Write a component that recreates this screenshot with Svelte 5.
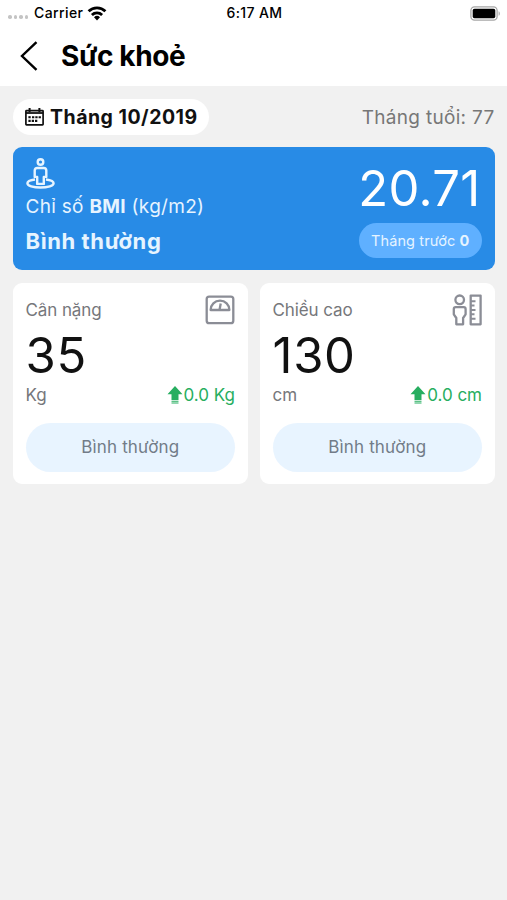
<!-- Health overview: BMI summary plus weight and height cards for a month. -->
<script lang="ts">
	interface Metric {
		id: 'weight' | 'height';
		label: string;
		value: number;
		unit: string;
		change: string;
		status: string;
	}

	const month = '10/2019';
	const ageInMonths = 77;

	const bmi = { value: '20.71', status: 'Bình thường', previous: 0 };

	const metrics: Metric[] = [
		{ id: 'weight', label: 'Cân nặng', value: 35, unit: 'Kg', change: '0.0', status: 'Bình thường' },
		{ id: 'height', label: 'Chiều cao', value: 130, unit: 'cm', change: '0.0', status: 'Bình thường' }
	];
</script>

<div class="screen">
	<header>
		<div class="status-bar">
			<div class="carrier">
				<span class="dots"><i></i><i></i><i></i><i></i></span>
				<span class="carrier-name">Carrier</span>
				<svg width="20" height="15" viewBox="0 0 20 15" fill="none" stroke="#000" stroke-width="2.8">
					<path d="M1.6 5.3a12 12 0 0 1 16.8 0" />
					<path d="M4.9 8.9a7.3 7.3 0 0 1 10.2 0" />
					<path d="M10 14.4 7 11.3a4.3 4.3 0 0 1 6 0z" fill="#000" stroke="none" />
				</svg>
			</div>
			<time>6:17 AM</time>
			<svg class="battery" width="31" height="15" viewBox="0 0 31 15">
				<rect x="0.9" y="0.9" width="26.2" height="13.2" rx="3.6" fill="#fff" stroke="#a6a6a6" stroke-width="1.3" />
				<rect x="2.7" y="2.7" width="22.6" height="9.6" rx="1.8" />
				<path d="M28.6 5.2c1.6.6 1.6 4 0 4.6z" fill="#a6a6a6" />
			</svg>
		</div>
		<div class="nav">
			<button type="button" class="back" aria-label="Quay lại">
				<svg width="18" height="30" viewBox="0 0 18 30" fill="none" stroke="#000" stroke-width="2.4">
					<path d="M16.5 1.2 2 15l14.5 13.8" />
				</svg>
			</button>
			<h1>Sức khoẻ</h1>
		</div>
	</header>

	<main>
		<div class="period">
			<button type="button" class="month">
				<svg width="19" height="18" viewBox="0 0 19 18" fill="none" stroke="#111" stroke-width="1.7">
					<rect x="0.9" y="2.6" width="17.2" height="14.3" rx="0.6" />
					<path d="M1 5h17" stroke-width="1.8" />
					<path d="M4.6 0v4M14.4 0v4" stroke-width="2" />
					<path d="M7 9.2h9M3.4 12.9h9" stroke-width="2.1" stroke-dasharray="2.3 1" />
					<path d="M3.4 9.2h2.3" stroke-width="2.1" />
				</svg>
				<span>Tháng {month}</span>
			</button>
			<span class="age">Tháng tuổi: {ageInMonths}</span>
		</div>

		<section class="bmi">
			<div class="bmi-info">
				<svg width="29" height="31" viewBox="0 0 29 31" fill="none" stroke="#e6f4ff" stroke-width="2.4">
					<circle cx="14.5" cy="4" r="2.8" />
					<path
						d="M11.3 10h6.4q2.6 0 2.6 2.6v6.3h-2.5v7h-6.6v-7H8.7v-6.3q0-2.6 2.6-2.6z"
						stroke-linejoin="round"
					/>
					<path d="M9 21.5c-4.5.6-7.6 2-7.6 3.7 0 2.5 5.8 4.3 13.1 4.3s13.1-1.8 13.1-4.3c0-1.7-3.1-3.1-7.6-3.7" />
				</svg>
				<p class="bmi-label">Chỉ số <b>BMI</b> (kg/m2)</p>
				<p class="bmi-status">{bmi.status}</p>
			</div>
			<div class="bmi-result">
				<span class="bmi-value">{bmi.value}</span>
				<span class="previous">Tháng trước <b>{bmi.previous}</b></span>
			</div>
		</section>

		<div class="metrics">
			{#each metrics as metric (metric.id)}
				<section class="card">
					<div class="card-head">
						<span>{metric.label}</span>
						{#if metric.id === 'weight'}
							<svg width="30" height="30" viewBox="0 0 30 30" fill="none" stroke="#8b8d96" stroke-width="2.3">
								<rect x="1.7" y="1.6" width="26.6" height="26.6" rx="2.5" />
								<path d="M5.6 15a9.4 9.4 0 0 1 18.8 0z" stroke-linejoin="round" />
								<path d="m14.5 15 1.2-6.5" />
							</svg>
						{:else}
							<svg width="30" height="32" viewBox="0 0 30 32" fill="none" stroke="#8b8d96" stroke-width="2.3">
								<circle cx="7.7" cy="5.8" r="4.3" />
								<path
									d="M3.7 13.2h8q1.9 0 1.9 1.9v5.2l-2.5 3.7v6.3H4.3V24l-2.5-3.7v-5.2q0-1.900 1.900-1.900z"
									stroke-linejoin="round"
								/>
								<path d="M18.7 1.600h9.900v28.700h-9.900z" stroke-linejoin="round" />
								<path d="M19 7.200h4.500M19 11.500h3.500M19 16h4.500M19 20.300h3.500M19 24.700h4.500" stroke-width="1.900" />
							</svg>
						{/if}
					</div>
					<div class="value">{metric.value}</div>
					<div class="card-foot">
						<span>{metric.unit}</span>
						<span class="change">
							<svg width="16" height="18" viewBox="0 0 16 18" fill="#27ae60">
								<path d="M8 0 15.500 8.300H11.500v6h-7v-6H.5zM4.500 15h7v.8h-7zM4.500 16.600h7v1h-7z" />
							</svg>
							{metric.change} {metric.unit}
						</span>
					</div>
					<div class="badge">{metric.status}</div>
				</section>
			{/each}
		</div>
	</main>
</div>

<style>
	:global(body) {
		background: #f1f1f1;
	}
	.screen {
		min-height: 900px;
		font-family: Inter, 'Liberation Sans', sans-serif;
		color: #111;
		background: #f1f1f1;
	}
	header {
		height: 86px;
		background: #fff;
	}
	svg {
		display: block;
		flex: none;
	}
	button {
		appearance: none;
		border: 0;
		padding: 0;
		background: none;
		font: inherit;
		color: inherit;
	}
	h1,
	p {
		margin: 0;
	}
	.status-bar {
		display: grid;
		grid-template-columns: 1fr auto 1fr;
		align-items: center;
		height: 26px;
		padding: 0 6px 0 8px;
		font-size: 14px;
		line-height: 26px;
		font-weight: 500;
		letter-spacing: 0.4px;
		color: #000;
	}
	.carrier {
		display: flex;
		align-items: center;
		height: 26px;
	}
	.dots {
		display: flex;
		gap: 2px;
		margin: 8px 6px 0 0;
	}
	.dots i {
		width: 3.5px;
		height: 3.5px;
		border-radius: 50%;
		background: #c4c4c4;
	}
	.carrier-name {
		margin-right: 4px;
	}
	.battery {
		justify-self: end;
	}
	.nav {
		display: flex;
		align-items: center;
		height: 60px;
		padding-left: 20px;
	}
	.back {
		margin-right: 23px;
	}
	h1 {
		font-size: 28px;
		line-height: 60px;
		font-weight: 700;
		letter-spacing: -0.4px;
		color: #000;
	}
	main {
		padding: 13px 12.5px;
	}
	.period {
		display: flex;
		justify-content: space-between;
		align-items: center;
		height: 36px;
	}
	.month {
		display: flex;
		align-items: center;
		gap: 6px;
		height: 36px;
		padding: 0 11.5px 0 12.5px;
		border-radius: 18px;
		background: #fff;
		font-size: 19.5px;
		font-weight: 650;
		letter-spacing: 0.5px;
	}
	.age {
		font-size: 19px;
		letter-spacing: 0.3px;
		color: #777;
	}
	.bmi {
		display: flex;
		justify-content: space-between;
		height: 123px;
		margin-top: 12px;
		padding: 11px 12.5px 0 13px;
		box-sizing: border-box;
		border-radius: 9px;
		background: #288be6;
		color: #e6f4ff;
	}
	.bmi-label {
		margin-top: 6px;
		font-size: 19px;
		line-height: 24px;
		letter-spacing: 0.3px;
	}
	.bmi-status {
		margin-top: 8px;
		font-size: 22px;
		line-height: 28px;
		font-weight: 700;
		letter-spacing: 0.6px;
	}
	.bmi-result {
		display: flex;
		flex-direction: column;
		align-items: flex-end;
	}
	.bmi-value {
		padding: 1px 1.5px 0 0;
		font-size: 49px;
		line-height: 60px;
		letter-spacing: 0.3px;
		color: #fff;
	}
	.previous {
		height: 35px;
		margin-top: 4px;
		padding: 0 12.5px;
		border-radius: 18px;
		background: #5fb0ff;
		font-size: 14.5px;
		line-height: 35px;
		letter-spacing: 0.1px;
	}
	.metrics {
		display: grid;
		grid-template-columns: 1fr 1fr;
		gap: 12px;
		margin-top: 13px;
	}
	.card {
		height: 201px;
		padding: 11px 12.5px 0 13px;
		box-sizing: border-box;
		border-radius: 9px;
		background: #fff;
		font-size: 17px;
		color: #76777b;
	}
	.card-head {
		display: flex;
		justify-content: space-between;
		align-items: center;
		height: 32px;
	}
	.card-head span {
		letter-spacing: -0.1px;
	}
	.value {
		font-size: 49px;
		line-height: 60px;
		letter-spacing: 0.7px;
		color: #111;
	}
	.card-foot {
		display: flex;
		justify-content: space-between;
		align-items: center;
		height: 18px;
	}
	.change {
		display: flex;
		align-items: center;
		gap: 1px;
		color: #27ae60;
	}
	.badge {
		height: 49px;
		margin-top: 19px;
		border-radius: 25px;
		background: #e8f4ff;
		line-height: 49px;
		letter-spacing: 0.15px;
		text-align: center;
		color: #727c88;
	}
</style>
